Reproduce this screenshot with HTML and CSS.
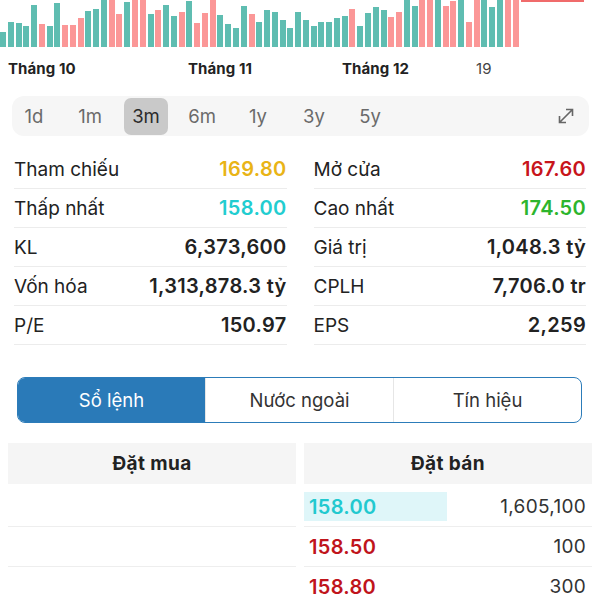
FILE: index.html
```html
<!DOCTYPE html>
<html lang="vi">
<head>
    <meta charset="UTF-8">
    <title>Chi tiết cổ phiếu</title>
    <link rel="stylesheet" href="styles.css">
</head>
<body class="body">

<div class="chart">
    <div class="bar up" style="height:15px"></div>
    <div class="bar up" style="height:25px"></div>
    <div class="bar up" style="height:24px"></div>
    <div class="bar up" style="height:21px"></div>
    <div class="bar up" style="height:42px"></div>
    <div class="bar down" style="height:23px"></div>
    <div class="bar up" style="height:21px"></div>
    <div class="bar up" style="height:44px"></div>
    <div class="bar down" style="height:22px"></div>
    <div class="bar down" style="height:22px"></div>
    <div class="bar down" style="height:29px"></div>
    <div class="bar up" style="height:36px"></div>
    <div class="bar up" style="height:38px"></div>
    <div class="bar up" style="height:47px"></div>
    <div class="bar down" style="height:47px"></div>
    <div class="bar down" style="height:33px"></div>
    <div class="bar up" style="height:45px"></div>
    <div class="bar down" style="height:47px"></div>
    <div class="bar down" style="height:47px"></div>
    <div class="bar up" style="height:33px"></div>
    <div class="bar down" style="height:37px"></div>
    <div class="bar up" style="height:42px"></div>
    <div class="bar up" style="height:31px"></div>
    <div class="bar down" style="height:35px"></div>
    <div class="bar up" style="height:46px"></div>
    <div class="bar down" style="height:24px"></div>
    <div class="bar down" style="height:34px"></div>
    <div class="bar down" style="height:47px"></div>
    <div class="bar up" style="height:32px"></div>
    <div class="bar up" style="height:23px"></div>
    <div class="bar up" style="height:19px"></div>
    <div class="bar up" style="height:41px"></div>
    <div class="bar down" style="height:33px"></div>
    <div class="bar up" style="height:25px"></div>
    <div class="bar up" style="height:37px"></div>
    <div class="bar up" style="height:35px"></div>
    <div class="bar up" style="height:27px"></div>
    <div class="bar up" style="height:19px"></div>
    <div class="bar up" style="height:35px"></div>
    <div class="bar up" style="height:27px"></div>
    <div class="bar up" style="height:21px"></div>
    <div class="bar up" style="height:25px"></div>
    <div class="bar up" style="height:25px"></div>
    <div class="bar up" style="height:29px"></div>
    <div class="bar up" style="height:31px"></div>
    <div class="bar down" style="height:38px"></div>
    <div class="bar up" style="height:21px"></div>
    <div class="bar up" style="height:34px"></div>
    <div class="bar up" style="height:40px"></div>
    <div class="bar up" style="height:37px"></div>
    <div class="bar down" style="height:30px"></div>
    <div class="bar down" style="height:35px"></div>
    <div class="bar up" style="height:47px"></div>
    <div class="bar up" style="height:41px"></div>
    <div class="bar down" style="height:47px"></div>
    <div class="bar down" style="height:47px"></div>
    <div class="bar up" style="height:47px"></div>
    <div class="bar down" style="height:41px"></div>
    <div class="bar down" style="height:46px"></div>
    <div class="bar up" style="height:47px"></div>
    <div class="bar down" style="height:25px"></div>
    <div class="bar down" style="height:47px"></div>
    <div class="bar up" style="height:47px"></div>
    <div class="bar up" style="height:40px"></div>
    <div class="bar up" style="height:47px"></div>
    <div class="bar down" style="height:47px"></div>
    <div class="bar down" style="height:47px"></div>
    <div class="last-price"></div>
</div>

<div class="axis">
    <span>Tháng 10</span>
    <span>Tháng 11</span>
    <span>Tháng 12</span>
    <span class="day">19</span>
</div>

<div class="ranges">
    <span class="range">1d</span>
    <span class="range">1m</span>
    <span class="range active">3m</span>
    <span class="range">6m</span>
    <span class="range">1y</span>
    <span class="range">3y</span>
    <span class="range">5y</span>
    <svg class="expand" viewBox="0 0 20 20">
        <path d="M3.5 16.5 L16.5 3.5 M10 3.5 H16.5 V10 M3.5 10 V16.5 H10"/>
    </svg>
</div>

<div class="stats">
    <div class="stat"><span>Tham chiếu</span><b class="ref">169.80</b></div>
    <div class="stat"><span>Mở cửa</span><b class="open">167.60</b></div>
    <div class="stat"><span>Thấp nhất</span><b class="low">158.00</b></div>
    <div class="stat"><span>Cao nhất</span><b class="high">174.50</b></div>
    <div class="stat"><span>KL</span><b>6,373,600</b></div>
    <div class="stat"><span>Giá trị</span><b>1,048.3 tỷ</b></div>
    <div class="stat"><span>Vốn hóa</span><b>1,313,878.3 tỷ</b></div>
    <div class="stat"><span>CPLH</span><b>7,706.0 tr</b></div>
    <div class="stat"><span>P/E</span><b>150.97</b></div>
    <div class="stat"><span>EPS</span><b>2,259</b></div>
</div>

<div class="tabs">
    <div class="tab active">Sổ lệnh</div>
    <div class="tab">Nước ngoài</div>
    <div class="tab">Tín hiệu</div>
</div>

<div class="book">
    <div class="side">
        <div class="book-head">Đặt mua</div>
        <div class="book-body">
            <div class="book-row"></div>
            <div class="book-row"></div>
            <div class="book-row"></div>
        </div>
    </div>
    <div class="side">
        <div class="book-head">Đặt bán</div>
        <div class="book-body">
            <div class="book-row"><span class="price hl">158.00</span><span class="qty">1,605,100</span></div>
            <div class="book-row"><span class="price red">158.50</span><span class="qty">100</span></div>
            <div class="book-row"><span class="price red">158.80</span><span class="qty">300</span></div>
        </div>
    </div>
</div>

</body>
</html>
```

FILE: styles.css
```css
.body{
    margin:0;
    width:600px;
    background:#fff;
    color:#222;
    font-family:Inter, "Noto Sans", sans-serif;
}

/* chart */
.chart{
    height:47px;
    display:flex;
    align-items:flex-end;
    gap:1.77px;
    overflow:hidden;
}
.bar{
    width:6px;
    flex:none;
}
.up{
    background:#5fbdb1;
}
.down{
    background:#fb9797;
}
.last-price{
    align-self:flex-start;
    flex:none;
    width:63px;
    height:1.5px;
    margin-left:1px;
    background:#f06b6b;
}
.axis{
    display:grid;
    grid-template-columns:180px 154px 134px auto;
    padding-left:8px;
    height:42px;
    align-items:center;
    font-size:15px;
    font-weight:700;
    letter-spacing:0.1px;
}
.axis .day{
    font-weight:400;
    color:#444;
}

/* range selector */
.ranges{
    margin:7px 11px 0 12px;
    height:40px;
    background:#f6f6f6;
    border-radius:12px;
    display:flex;
    align-items:center;
    gap:12px;
    padding-right:13px;
}
.range{
    width:44px;
    height:37px;
    display:flex;
    align-items:center;
    justify-content:center;
    font-size:18.5px;
    color:#6a6a6a;
    border-radius:7px;
}
.range.active{
    background:#c9c9c9;
    color:#2b2b2b;
}
.expand{
    margin-left:auto;
    width:20px;
    height:20px;
    fill:none;
    stroke:#666;
    stroke-width:1.6;
}

/* stats */
.stats{
    display:grid;
    grid-template-columns:1fr 1fr;
    column-gap:27px;
    padding:0 14px;
    margin-top:14px;
}
.stat{
    display:flex;
    justify-content:space-between;
    align-items:center;
    height:38px;
    border-bottom:1px solid #ececec;
    font-size:19px;
}
.stat b{
    font-size:20px;
    font-weight:600;
    letter-spacing:0.3px;
}
.ref{
    color:#e9b416;
}
.low{
    color:#22cdd0;
}
.open{
    color:#c8151b;
}
.high{
    color:#2db52d;
}

/* tabs */
.tabs{
    margin:32px 18px 0 17px;
    height:46px;
    display:flex;
    border:1.5px solid #2c7cb9;
    border-radius:8px;
    overflow:hidden;
    box-sizing:border-box;
}
.tab{
    flex:1;
    display:flex;
    align-items:center;
    justify-content:center;
    font-size:18.5px;
    color:#333;
    border-left:1px solid #e6e6e6;
}
.tab.active{
    background:#2a7ab8;
    color:#fff;
    border-left:none;
}

/* order book */
.book{
    margin-top:20px;
    display:grid;
    grid-template-columns:1fr 1fr;
    gap:8px;
    padding:0 8px;
}
.book-head{
    height:41px;
    background:#f5f5f5;
    display:flex;
    align-items:center;
    justify-content:center;
    font-size:19px;
    font-weight:700;
    letter-spacing:0.4px;
}
.book-body{
    padding-top:3px;
}
.book-row{
    height:39px;
    border-bottom:1px solid #eeeeee;
    display:flex;
    align-items:center;
    justify-content:space-between;
    padding-right:6px;
    font-size:19px;
    letter-spacing:0.3px;
}
.price{
    width:143px;
    height:29px;
    padding-left:5px;
    box-sizing:border-box;
    display:flex;
    align-items:center;
    font-size:20px;
    font-weight:600;
}
.price.hl{
    background:#dff6f9;
    color:#22c9cf;
}
.price.red{
    color:#c0141b;
}
.qty{
    color:#333;
}
```
